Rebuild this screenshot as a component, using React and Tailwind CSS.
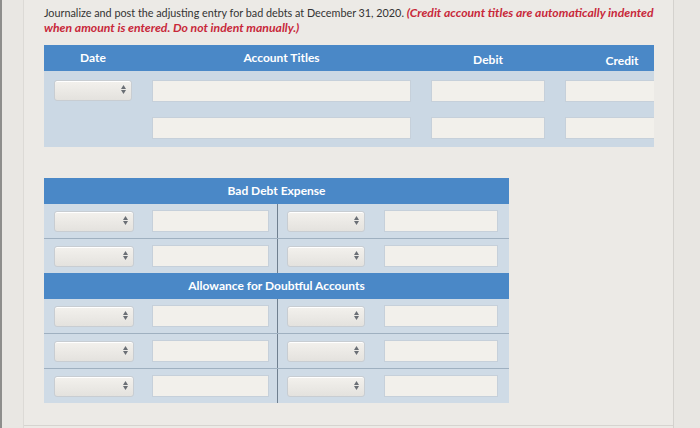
import React from 'react';

const font = { fontFamily: 'Lato, "Open Sans", sans-serif' };

function Select({ w }) {
  return (
    <div
      className={`${w} h-[21px] relative rounded-[3px] border border-[#c8cdd2] bg-gradient-to-b from-[#f3f1ed] to-[#e4e2de] shadow-[inset_0_1px_0_#fff]`}
    >
      <span className="absolute right-[5px] top-[4px] flex flex-col items-center leading-none text-[#6a6f75]">
        <svg width="5" height="4" viewBox="0 0 5 4"><path d="M2.5 0L5 4H0z" fill="currentColor" /></svg>
        <svg width="5" height="4" viewBox="0 0 5 4" className="mt-[1px]"><path d="M0 0h5L2.5 4z" fill="currentColor" /></svg>
      </span>
    </div>
  );
}

function Input({ w }) {
  return <div className={`${w} h-[22px] border border-[#c6d0da] bg-[#f2f0eb]`} />;
}

function TRow({ last }) {
  return (
    <div className={`flex ${last ? '' : 'border-b border-[#9fb0c0]'}`}>
      <div className="w-[234px] flex items-center gap-[18px] pl-[10px] h-[34px] border-r border-[#6f7f8f]">
        <Select w="w-[80px]" />
        <Input w="w-[117px]" />
      </div>
      <div className="flex-1 flex items-center gap-[19px] pl-[9px] h-[34px]">
        <Select w="w-[78px]" />
        <Input w="w-[114px]" />
      </div>
    </div>
  );
}

function THeader({ title }) {
  return (
    <div className="h-[26px] bg-[#4a88c7] flex items-center justify-center text-white text-[12px] font-bold">
      {title}
    </div>
  );
}

export default function App() {
  return (
    <div className="w-[700px] h-[428px] bg-[#eceae6] flex overflow-hidden" style={font}>
      <div className="w-[2px] bg-[#8e8e8c]" />
      <div className="w-[22px] bg-[#e9e7e3] border-r border-[#dcdad6]" />
      <div className="w-[649px] flex flex-col border-b border-[#d6d4d0] h-[426px]">
        <div className="pl-[20px] pt-[5px] text-[10.8px] leading-[15px] text-[#333333] whitespace-nowrap">
          Journalize and post the adjusting entry for bad debts at December 31, 2020.{' '}
          <span className="text-[#c8283a] italic font-bold text-[12.2px]">
            (Credit account titles are automatically indented
            <br />
            when amount is entered. Do not indent manually.)
          </span>
        </div>

        <div className="ml-[20px] mt-[10px] w-[610px] overflow-hidden">
          <div className="w-[645px]">
            <div className="h-[26px] bg-[#4a88c7] flex items-center text-white text-[12px] font-bold">
              <div className="w-[98px] text-center">Date</div>
              <div className="w-[279px] text-center">Account Titles</div>
              <div className="w-[134px] text-center pt-[3px]">Debit</div>
              <div className="w-[134px] text-center pt-[5px]">Credit</div>
            </div>
            <div className="bg-[#cbd8e4] py-[8px] flex flex-col gap-[14px]">
              <div className="flex items-center h-[23px]">
                <div className="w-[98px] pl-[10px]"><Select w="w-[78px]" /></div>
                <div className="w-[279px] pl-[10px]"><Input w="w-[259px]" /></div>
                <div className="w-[134px] pl-[10px]"><Input w="w-[114px]" /></div>
                <div className="w-[134px] pl-[10px]"><Input w="w-[114px]" /></div>
              </div>
              <div className="flex items-center h-[23px]">
                <div className="w-[98px]" />
                <div className="w-[279px] pl-[10px]"><Input w="w-[259px]" /></div>
                <div className="w-[134px] pl-[10px]"><Input w="w-[114px]" /></div>
                <div className="w-[134px] pl-[10px]"><Input w="w-[114px]" /></div>
              </div>
            </div>
          </div>
        </div>

        <div className="ml-[20px] mt-[31px] w-[465px]">
          <THeader title="Bad Debt Expense" />
          <div className="bg-[#cfdbe6]">
            <TRow />
            <TRow last />
          </div>
          <THeader title="Allowance for Doubtful Accounts" />
          <div className="bg-[#cfdbe6]">
            <TRow />
            <TRow />
            <TRow last />
          </div>
        </div>
      </div>
      <div className="w-[1px] bg-[#d4d2ce]" />
      <div className="flex-1 bg-[#e8e6e2]" />
    </div>
  );
}
